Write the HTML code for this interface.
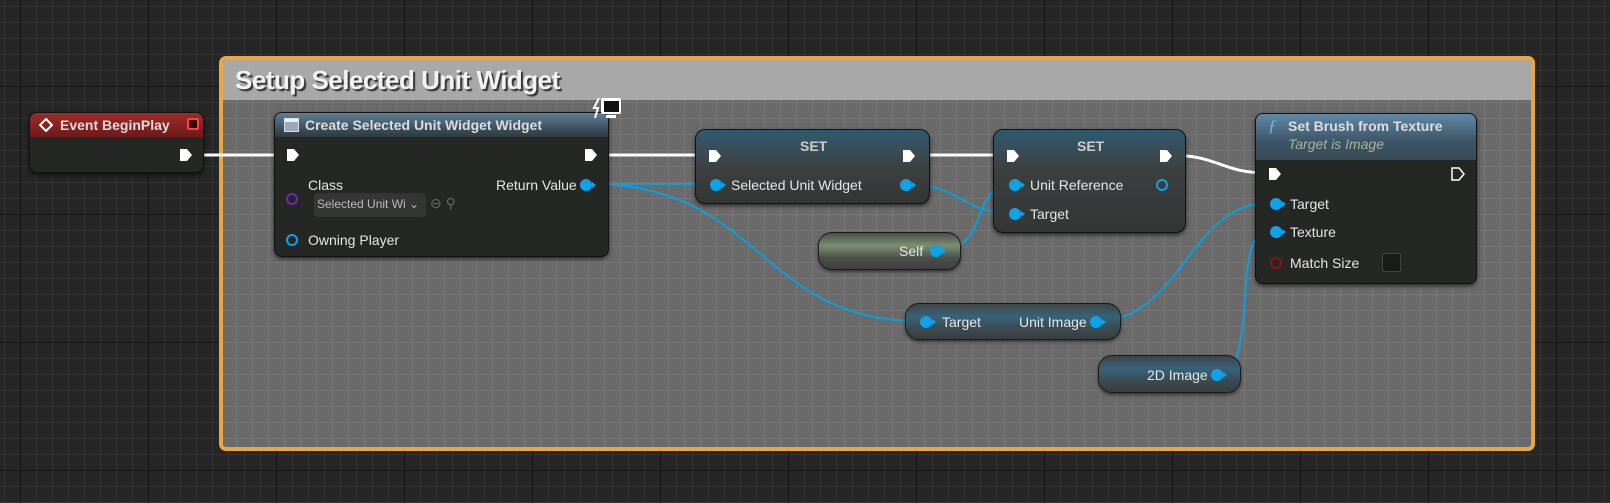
<!DOCTYPE html>
<html><head><meta charset="utf-8"><style>
*{margin:0;padding:0;box-sizing:border-box}
body{width:1610px;height:503px;overflow:hidden;position:relative;font-family:"Liberation Sans",sans-serif;color:#e6e6e6;
background-color:#262626;
background-image:linear-gradient(#161616 1px,transparent 1px),linear-gradient(90deg,#161616 1px,transparent 1px),linear-gradient(#333 1px,transparent 1px),linear-gradient(90deg,#333 1px,transparent 1px);
background-size:128px 128px,128px 128px,16px 16px,16px 16px;background-position:20px 86px,20px 86px,4px 6px,4px 6px}
.cm{position:absolute;left:219px;top:56px;width:1316px;height:395px;border:4px solid #eaa640;border-radius:7px;
background-color:#6a6a6a;background-image:linear-gradient(#777 1px,transparent 1px),linear-gradient(90deg,#777 1px,transparent 1px);background-size:16px 16px;background-position:-3px -6px;overflow:hidden}
.cmt{height:40px;background:#a8a8a8;font-size:26px;font-weight:bold;color:#f2f2f2;padding:5px 0 0 12px;text-shadow:2px 2px 1px #333;letter-spacing:-0.5px}
.n{position:absolute;background:#252725;border-radius:8px;box-shadow:0 2px 4px rgba(0,0,0,.6);border:1px solid #111;font-size:14px}
.h{height:24px;border-radius:7px 7px 0 0;font-weight:bold;font-size:14px;padding:4px 0 0 30px;color:#ddd}
.pin{position:absolute;width:12px;height:12px;border-radius:50%;background:#0ba4e8}
.pin:after{content:"";position:absolute;right:-4px;top:3px;border-left:4px solid #0ba4e8;border-top:3px solid transparent;border-bottom:3px solid transparent}
.ex{position:absolute;width:14px;height:14px}
.t{position:absolute;white-space:nowrap}
.pill{position:absolute;border-radius:14px;border:1px solid #1a1a1a;box-shadow:0 2px 3px rgba(0,0,0,.5);font-size:14px}
</style></head><body>
<div class="cm"><div class="cmt">Setup Selected Unit Widget</div></div>

<svg width="1610" height="503" style="position:absolute;left:0;top:0">
<g fill="none" stroke-width="2">
<path d="M192 155 H285" stroke="#fff" stroke-width="3"/>
<path d="M595 155 H705" stroke="#fff" stroke-width="3"/>
<path d="M912 155 H1010" stroke="#fff" stroke-width="3"/>
<path d="M1168 155 C1220 155,1220 173,1268 173" stroke="#fff" stroke-width="3"/>
<path d="M592 184 H712" stroke="#0aa0e0"/>
<path d="M592 184 C760 184,760 321,918 321" stroke="#0aa0e0"/>
<path d="M908 184 C960 184,960 213,1012 213" stroke="#0aa0e0"/>
<path d="M938 251 C990 251,970 184,1012 184" stroke="#0aa0e0"/>
<path d="M1098 321 C1180 321,1190 203,1268 203" stroke="#0aa0e0"/>
<path d="M1218 374 C1260 374,1230 231,1268 231" stroke="#0aa0e0"/>
</g></svg>

<div class="n" style="left:29px;top:112px;width:175px;height:61px">
<div class="h" style="background:linear-gradient(180deg,#a02a28,#6d1b1b);padding-left:30px">Event BeginPlay</div>
<svg style="position:absolute;left:9px;top:5px" width="14" height="14"><path d="M7 1 L13 7 L7 13 L1 7Z" fill="none" stroke="#fff" stroke-width="2"/></svg>
<div style="position:absolute;left:157px;top:5px;width:12px;height:12px;border:2px solid #ff4040;background:#300;border-radius:2px"></div>
<svg class="ex" style="left:149px;top:35px"><path d="M1 1H8L13 7L8 13H1Z" fill="#fff"/></svg>
</div>

<div class="n" style="left:274px;top:112px;width:335px;height:145px">
<div class="h" style="background:linear-gradient(180deg,#5f7f96,#3a4c58 70%,#2e3a40)">Create Selected Unit Widget Widget</div>
<div style="position:absolute;left:9px;top:5px;width:15px;height:14px;border:1px solid #ddd;background:linear-gradient(#eee 3px,#9ab 3px)"></div>
<svg class="ex" style="left:11px;top:35px"><path d="M1 1H8L13 7L8 13H1Z" fill="#fff"/></svg>
<svg class="ex" style="left:309px;top:35px"><path d="M1 1H8L13 7L8 13H1Z" fill="#fff"/></svg>
<div class="t" style="left:33px;top:64px">Class</div>
<div style="position:absolute;left:11px;top:80px;width:12px;height:12px;border:2px solid #6a2cb0;border-radius:50%"></div>
<div style="position:absolute;left:39px;top:80px;width:112px;height:24px;background:#353535;border-radius:3px;font-size:12px;color:#bbb;padding:4px 0 0 3px">Selected Unit Wi ⌄</div>
<div class="t" style="left:155px;top:82px;color:#666;font-size:14px">⊖ ⚲</div>
<div class="t" style="left:221px;top:64px">Return Value</div>
<div class="pin" style="left:305px;top:66px"></div>
<div style="position:absolute;left:11px;top:121px;width:12px;height:12px;border:2px solid #0ba4e8;border-radius:50%"></div>
<div class="t" style="left:33px;top:119px">Owning Player</div>
</div>
<svg style="position:absolute;left:591px;top:96px" width="32" height="26"><path d="M8 2L3 12H7L4 22" stroke="#fff" stroke-width="2" fill="none"/><rect x="10" y="2" width="20" height="16" rx="2" fill="#fff"/><rect x="13" y="5" width="15" height="11" fill="#111"/><rect x="15" y="19" width="10" height="3" fill="#fff"/></svg>

<div class="n" style="left:695px;top:129px;width:235px;height:75px;background:linear-gradient(180deg,#2f5a70 0,#3a4a52 25px,#3c3f3f 40px,#343636);border-radius:10px">
<div class="t" style="left:104px;top:8px;font-weight:bold;color:#ccc">SET</div>
<svg class="ex" style="left:12px;top:19px"><path d="M1 1H8L13 7L8 13H1Z" fill="#fff"/></svg>
<svg class="ex" style="left:206px;top:19px"><path d="M1 1H8L13 7L8 13H1Z" fill="#fff"/></svg>
<div class="pin" style="left:14px;top:49px"></div><div class="t" style="left:35px;top:47px">Selected Unit Widget</div>
<div class="pin" style="left:204px;top:49px"></div>
</div>

<div class="n" style="left:993px;top:129px;width:193px;height:104px;background:linear-gradient(180deg,#2f5a70 0,#3a4a52 25px,#3c3f3f 40px,#343636);border-radius:10px">
<div class="t" style="left:83px;top:8px;font-weight:bold;color:#ccc">SET</div>
<svg class="ex" style="left:12px;top:19px"><path d="M1 1H8L13 7L8 13H1Z" fill="#fff"/></svg>
<svg class="ex" style="left:165px;top:19px"><path d="M1 1H8L13 7L8 13H1Z" fill="#fff"/></svg>
<div class="pin" style="left:15px;top:49px"></div><div class="t" style="left:36px;top:47px">Unit Reference</div>
<div style="position:absolute;left:162px;top:49px;width:12px;height:12px;border:2px solid #0ba4e8;border-radius:50%"></div>
<div class="pin" style="left:15px;top:78px"></div><div class="t" style="left:36px;top:76px">Target</div>
</div>

<div class="pill" style="left:818px;top:232px;width:143px;height:38px;background:linear-gradient(180deg,#4a4f48,#7a8e72 35%,#4a4e48 70%,#3e403e)">
<div class="t" style="left:80px;top:10px">Self</div><div class="pin" style="left:111px;top:12px"></div></div>

<div class="pill" style="left:905px;top:303px;width:216px;height:37px;background:linear-gradient(180deg,#3e4548,#36627a 35%,#3c4a50 70%,#3a3d3e)">
<div class="pin" style="left:14px;top:12px"></div><div class="t" style="left:36px;top:10px">Target</div>
<div class="t" style="left:113px;top:10px">Unit Image</div><div class="pin" style="left:184px;top:12px"></div></div>

<div class="pill" style="left:1098px;top:355px;width:143px;height:38px;background:linear-gradient(180deg,#3e4548,#36627a 35%,#3c4a50 70%,#3a3d3e)">
<div class="t" style="left:48px;top:11px">2D Image</div><div class="pin" style="left:112px;top:13px"></div></div>

<div class="n" style="left:1255px;top:113px;width:222px;height:171px">
<div class="h" style="height:46px;background:linear-gradient(180deg,#5f88a6,#3d5566 60%,#3a4a55);padding-left:32px">Set Brush from Texture
<div style="font-weight:normal;font-style:italic;color:#a9b49a;font-size:14px;margin-top:2px">Target is Image</div></div>
<div class="t" style="left:12px;top:2px;color:#6ab8f0;font-style:italic;font-family:'Liberation Serif',serif;font-size:17px">ƒ</div>
<svg class="ex" style="left:12px;top:53px"><path d="M1 1H8L13 7L8 13H1Z" fill="#fff"/></svg>
<svg class="ex" style="left:195px;top:53px"><path d="M1 1H8L13 7L8 13H1Z" fill="none" stroke="#fff" stroke-width="1.5"/></svg>
<div class="pin" style="left:14px;top:84px"></div><div class="t" style="left:34px;top:82px">Target</div>
<div class="pin" style="left:14px;top:112px"></div><div class="t" style="left:34px;top:110px">Texture</div>
<div style="position:absolute;left:14px;top:143px;width:12px;height:12px;border:2px solid #8a1414;border-radius:50%"></div>
<div class="t" style="left:34px;top:141px">Match Size</div>
<div style="position:absolute;left:126px;top:139px;width:19px;height:19px;background:#1a1a1a;border:1px solid #444;border-radius:2px"></div>
</div>
</body></html>
